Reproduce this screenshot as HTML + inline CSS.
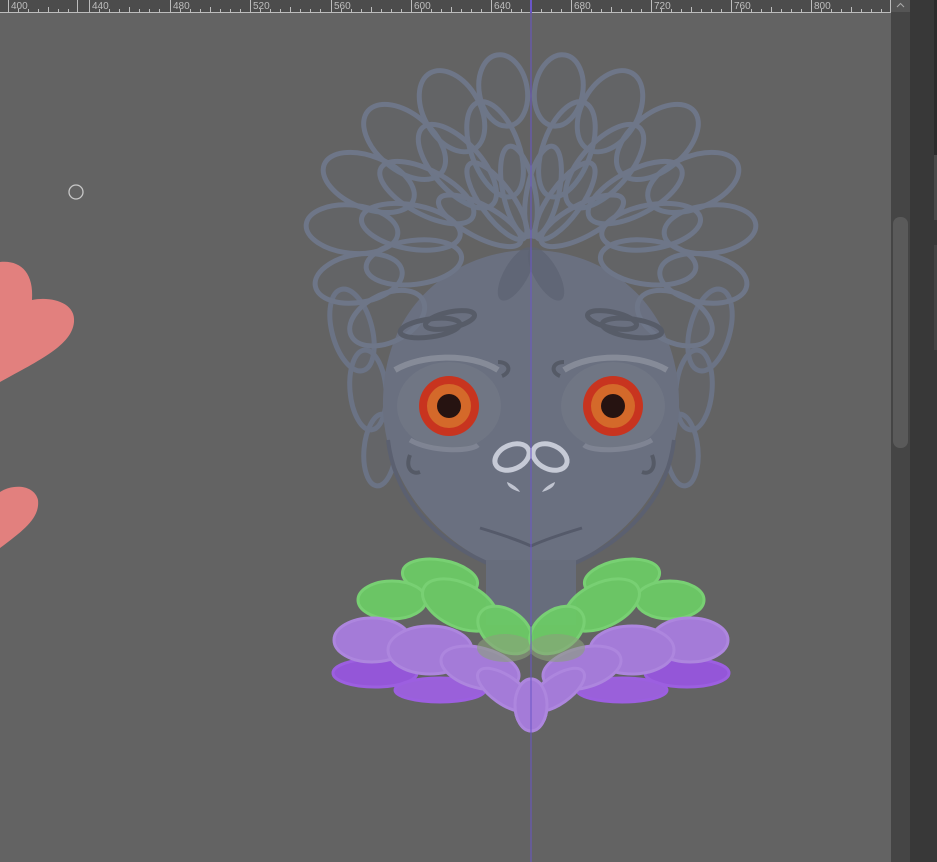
<!DOCTYPE html>
<html><head><meta charset="utf-8"><style>
html,body{margin:0;padding:0;width:937px;height:862px;overflow:hidden;background:#636363;font-family:"Liberation Sans",sans-serif}
</style></head><body>
<svg width="937" height="862" viewBox="0 0 937 862" xmlns="http://www.w3.org/2000/svg" style="position:absolute;left:0;top:0">
<rect width="937" height="862" fill="#636363"/>
<path d="M0 262 C20 260 34 272 32 300 C50 296 76 302 74 322 C72 345 40 360 0 382 Z" fill="#e2807e"/>
<path d="M0 492 C12 484 34 484 38 500 C40 518 24 530 0 548 Z" fill="#e2807e"/>
<circle cx="76" cy="192" r="7" fill="none" stroke="#c8c8c8" stroke-width="1.3"/>

<defs>
<g id="half">
  <g fill="rgba(110,118,136,0.12)" stroke="#6b7385" stroke-width="5">
    <ellipse cx="352" cy="330" rx="20" ry="42" transform="rotate(-15 352 330)"/>
    <ellipse cx="368" cy="390" rx="18" ry="40" transform="rotate(-5 368 390)"/>
    <ellipse cx="380" cy="450" rx="16" ry="36" transform="rotate(5 380 450)"/>
  </g>
  <path d="M531 250 C460 250 385 300 383 400 C381 480 440 555 531 578 Z" fill="#6a7080"/>
  <path d="M388 440 C395 500 440 555 531 578" fill="none" stroke="#5b6070" stroke-width="4"/>
  <rect x="486" y="560" width="45" height="65" fill="#676d7c"/>
  <g fill="rgba(110,118,136,0.10)" stroke="#6e7688" stroke-width="5">
    <ellipse cx="0" cy="-160" rx="24" ry="36" transform="translate(531,248) rotate(-10)"/>
    <ellipse cx="0" cy="-158" rx="28" ry="44" transform="translate(531,248) rotate(-30)"/>
    <ellipse cx="0" cy="-165" rx="28" ry="48" transform="translate(531,248) rotate(-50)"/>
    <ellipse cx="0" cy="-175" rx="26" ry="48" transform="translate(531,248) rotate(-68)"/>
    <ellipse cx="0" cy="-180" rx="24" ry="46" transform="translate(531,248) rotate(-84)"/>
    <ellipse cx="0" cy="-175" rx="24" ry="44" transform="translate(531,248) rotate(-100)"/>
    <ellipse cx="0" cy="-160" rx="24" ry="40" transform="translate(531,248) rotate(-116)"/>
    <ellipse cx="0" cy="-105" rx="24" ry="50" transform="translate(531,248) rotate(-20)"/>
    <ellipse cx="0" cy="-110" rx="24" ry="52" transform="translate(531,248) rotate(-42)"/>
    <ellipse cx="0" cy="-118" rx="22" ry="52" transform="translate(531,248) rotate(-62)"/>
    <ellipse cx="0" cy="-122" rx="22" ry="50" transform="translate(531,248) rotate(-80)"/>
    <ellipse cx="0" cy="-118" rx="22" ry="48" transform="translate(531,248) rotate(-97)"/>
    <ellipse cx="0" cy="-58" rx="16" ry="46" transform="translate(531,248) rotate(-12)"/>
    <ellipse cx="0" cy="-58" rx="16" ry="46" transform="translate(531,248) rotate(-36)"/>
    <ellipse cx="0" cy="-58" rx="16" ry="46" transform="translate(531,248) rotate(-62)"/>
  </g>
  <g fill="#5d6373" opacity="0.7">
    <ellipse cx="0" cy="30" rx="12" ry="30" transform="translate(531,248) rotate(30)"/>
  </g>
  <g fill="none" stroke="#575c68" stroke-width="5">
    <ellipse cx="430" cy="328" rx="30" ry="9" transform="rotate(-8 430 328)"/>
    <ellipse cx="450" cy="320" rx="25" ry="8" transform="rotate(-12 450 320)"/>
  </g>
  <ellipse cx="449" cy="406" rx="52" ry="44" fill="#7a808d" opacity="0.35"/>
  <path d="M395 370 C420 355 470 352 498 370" fill="none" stroke="#8d929e" stroke-width="6" opacity="0.8"/>
  <path d="M410 440 C430 452 470 452 478 445" fill="none" stroke="#858a97" stroke-width="5" opacity="0.8"/>
  <path d="M498 362 C510 362 512 372 502 376" fill="none" stroke="#555a66" stroke-width="4"/>
  <path d="M410 455 C405 468 412 475 420 472" fill="none" stroke="#555a66" stroke-width="4"/>
  <circle cx="449" cy="406" r="30" fill="#c8341f"/>
  <circle cx="449" cy="406" r="22" fill="#d4692a"/>
  <circle cx="449" cy="406" r="12" fill="#261311"/>
  <ellipse cx="512" cy="457" rx="18" ry="12" transform="rotate(-25 512 457)" fill="none" stroke="#c6cad6" stroke-width="5"/>
  <path d="M507 482 C512 484 518 488 520 492 C514 490 508 488 507 482Z" fill="#c0c4d0"/>
  <path d="M480 528 C500 534 518 540 531 546" fill="none" stroke="#555a6a" stroke-width="3"/>
  <g fill="#6ccb66" stroke="#7ad674" stroke-width="3" opacity="0.95">
    <ellipse cx="440" cy="578" rx="38" ry="18" transform="rotate(10 440 578)"/>
    <ellipse cx="392" cy="600" rx="34" ry="19"/>
    <ellipse cx="460" cy="605" rx="40" ry="22" transform="rotate(25 460 605)"/>
    <ellipse cx="505" cy="630" rx="30" ry="20" transform="rotate(35 505 630)"/>
  </g>
  <g fill="#a47bd8" stroke="#ad86de" stroke-width="3">
    <ellipse cx="375" cy="673" rx="42" ry="14" fill="#9456d8" stroke="#9c5fe0"/>
    <ellipse cx="440" cy="690" rx="45" ry="12" fill="#9a60da" stroke="#9c5fe0"/>
    <ellipse cx="372" cy="640" rx="38" ry="22"/>
    <ellipse cx="430" cy="650" rx="42" ry="24"/>
    <ellipse cx="480" cy="668" rx="40" ry="20" transform="rotate(15 480 668)"/>
    <ellipse cx="505" cy="690" rx="32" ry="14" transform="rotate(35 505 690)"/>
    <ellipse cx="531" cy="705" rx="16" ry="26"/>
  </g>
  <ellipse cx="505" cy="648" rx="28" ry="14" fill="#8aa07c" opacity="0.6"/>
</g>
</defs>
<use href="#half"/>
<use href="#half" transform="translate(1062,0) scale(-1,1)"/>
<rect x="530.5" y="12" width="1" height="850" fill="#6a56c8"/>

<rect x="0" y="0" width="891" height="13" fill="#4c4c4c"/>
<rect x="0" y="12" width="891" height="1" fill="#bdbdbd"/>
<rect x="890" y="0" width="1" height="13" fill="#bdbdbd"/>
<g fill="#bdbdbd" font-family="Liberation Sans, sans-serif" font-size="10">
  <text x="11" y="9">400</text><text x="92" y="9">440</text><text x="173" y="9">480</text>
  <text x="253" y="9">520</text><text x="334" y="9">560</text><text x="414" y="9">600</text>
  <text x="494" y="9">640</text><text x="574" y="9">680</text><text x="654" y="9">720</text>
  <text x="734" y="9">760</text><text x="814" y="9">800</text>
</g>
<g stroke="#bdbdbd" stroke-width="1">
  <path d="M8.5 0V13M89.5 0V13M170.5 0V13M250.5 0V13M331.5 0V13M411.5 0V13M491.5 0V13M571.5 0V13M651.5 0V13M731.5 0V13M811.5 0V13M77.5 0V13"/>
  <path d="M18.5 9V13M28.5 9V13M38.5 9V13M48.5 7V13M58.5 9V13M68.5 9V13M99.5 9V13M109.5 9V13M119.5 9V13M129.5 7V13M139.5 9V13M149.5 9V13M159.5 9V13M180.5 9V13M190.5 9V13M200.5 9V13M210.5 7V13M220.5 9V13M230.5 9V13M240.5 9V13M260.5 9V13M270.5 9V13M280.5 9V13M290.5 7V13M300.5 9V13M310.5 9V13M320.5 9V13M341.5 9V13M351.5 9V13M361.5 9V13M371.5 7V13M381.5 9V13M391.5 9V13M401.5 9V13M421.5 9V13M431.5 9V13M441.5 9V13M451.5 7V13M461.5 9V13M471.5 9V13M481.5 9V13M501.5 9V13M511.5 9V13M521.5 9V13M541.5 9V13M551.5 9V13M561.5 9V13M581.5 9V13M591.5 9V13M601.5 9V13M611.5 7V13M621.5 9V13M631.5 9V13M641.5 9V13M661.5 9V13M671.5 9V13M681.5 9V13M691.5 7V13M701.5 9V13M711.5 9V13M721.5 9V13M741.5 9V13M751.5 9V13M761.5 9V13M771.5 7V13M781.5 9V13M791.5 9V13M801.5 9V13M821.5 9V13M831.5 9V13M841.5 9V13M851.5 7V13M861.5 9V13M871.5 9V13M881.5 9V13"/>
</g>
<rect x="530" y="0" width="2" height="13" fill="#6a56c8"/>

<rect x="891" y="0" width="19" height="862" fill="#454545"/>
<rect x="891" y="0" width="19" height="12" fill="#555"/>
<path d="M897 7 L900.5 3.5 L904 7" fill="none" stroke="#aaa" stroke-width="1"/>
<rect x="893" y="217" width="15" height="231" rx="7" fill="#5a5a5a"/>
<rect x="910" y="0" width="27" height="862" fill="#383838"/>
<rect x="934" y="0" width="3" height="155" fill="#2c2c2c"/>
<rect x="934" y="155" width="3" height="65" fill="#4a4a4a"/>
<rect x="934" y="245" width="3" height="105" fill="#444"/>
</svg>
</body></html>
